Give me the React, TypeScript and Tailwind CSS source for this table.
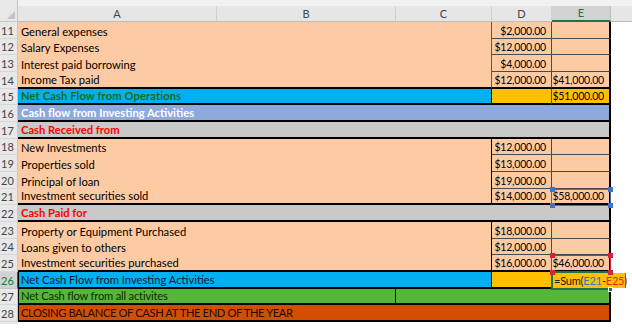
import React from "react";

const FONT = "font-['Lato','Liberation_Sans',sans-serif]";
const NUM = "text-[10.5px] tracking-[-0.2px]";

function RowNum({ n, h, active }: { n: number; h: string; active?: boolean }) {
  return (
    <div
      className={`${h} w-[18px] shrink-0 flex items-end justify-center pr-[2px] text-[11px] leading-[14px] border-b border-r ${
        active
          ? "bg-[#d2d2d2] text-[#217346] border-b-[#c6c6c6] border-r-[#217346]"
          : "bg-[#e8e8e8] text-[#444444] border-b-[#d6d6d6] border-r-[#c6c6c6]"
      }`}
    >
      {n}
    </div>
  );
}

function PeachRow({ n, h, a, d, e, last, strongC }: { n: number; h: string; a: string; d: string; e?: string; last?: boolean; strongC?: boolean }) {
  return (
    <div className={`flex ${h}`}>
      <RowNum n={n} h={h} />
      <div
        className={`w-[474px] bg-[#fdcba3] flex items-end pl-[3px] text-black border-r ${
          strongC ? "border-r-black" : "border-r-[#5a5a5a]"
        } ${last ? "border-b-2 border-b-black" : ""}`}
      >
        {a}
      </div>
      <div
        className={`w-[60px] bg-[#fdcba3] flex items-end justify-end pr-[5px] text-black ${NUM} border-r border-r-[#4a4a4a] ${
          last ? "border-b-2 border-b-black" : "border-b border-b-[#4a4a4a]"
        }`}
      >
        {d}
      </div>
      <div
        className={`w-[59px] bg-[#fdcba3] flex items-end justify-end pr-[5px] text-black ${NUM} border-r-2 border-r-black ${
          last ? "border-b-2 border-b-black" : "border-b border-b-[#4a4a4a]"
        }`}
      >
        {e}
      </div>
    </div>
  );
}

function Corner({ x, y, color }: { x: number; y: number; color: string }) {
  return <div className={`absolute w-[5px] h-[5px] ${color}`} style={{ left: x - 2, top: y - 2 }} />;
}

export default function App() {
  return (
    <div className={`relative w-[632px] h-[332px] bg-white overflow-hidden ${FONT} text-[11.2px] leading-[14px]`}>
      {/* Column header */}
      <div className="flex h-[22px] bg-[#f2f2f2]">
        <div className="w-[18px] h-[22px] bg-[#e8e8e8] border-r border-b border-[#c6c6c6] flex items-end justify-end pr-[2px] pb-[2px]">
          <svg width="8" height="8" viewBox="0 0 8 8">
            <polygon points="8,0 8,8 0,8" fill="#c2c2c2" />
          </svg>
        </div>
        <div className="flex flex-col justify-end">
          <div className="flex h-[16px] text-[11px] leading-[14px] text-[#444444]">
            <div className="w-[199px] bg-[#e6e6e6] border-r border-b border-r-[#cfcfcf] border-b-[#bdbdbd] flex items-center justify-center">A</div>
            <div className="w-[179px] bg-[#e6e6e6] border-r border-b border-r-[#cfcfcf] border-b-[#bdbdbd] flex items-center justify-center">B</div>
            <div className="w-[96px] bg-[#e6e6e6] border-r border-b border-r-[#cfcfcf] border-b-[#bdbdbd] flex items-center justify-center">C</div>
            <div className="w-[60px] bg-[#e6e6e6] border-r border-b border-r-[#cfcfcf] border-b-[#bdbdbd] flex items-center justify-center">D</div>
            <div className="w-[59px] bg-[#d2d2d2] border-r border-r-[#bdbdbd] border-b-2 border-b-[#217346] flex items-center justify-center text-[#217346]">E</div>
            <div className="w-[21px] bg-[#e6e6e6] border-b border-b-[#bdbdbd]" />
          </div>
        </div>
      </div>

      <PeachRow n={11} h="h-[17px]" a="General expenses" d="$2,000.00" />
      <PeachRow n={12} h="h-[16px]" a="Salary Expenses" d="$12,000.00" />
      <PeachRow n={13} h="h-[17px]" a="Interest paid borrowing" d="$4,000.00" />
      <PeachRow n={14} h="h-[17px]" a="Income Tax paid" d="$12,000.00" e="$41,000.00" last />

      {/* 15 */}
      <div className="flex h-[16px]">
        <RowNum n={15} h="h-[16px]" />
        <div className="w-[474px] bg-[#00b0f0] border-r border-r-black border-b-2 border-b-black flex items-end pl-[3px] font-bold tracking-[0.1px] text-[#1a6a1a]">
          Net Cash Flow from Operations
        </div>
        <div className="w-[60px] bg-[#ffc000] border-r border-r-[#4a4a4a] border-b-2 border-b-black" />
        <div className={`w-[59px] bg-[#ffc000] border-r-2 border-r-black border-b-2 border-b-black flex items-end justify-end pr-[5px] text-black ${NUM}`}>
          $51,000.00
        </div>
      </div>

      {/* 16 */}
      <div className="flex h-[17px]">
        <RowNum n={16} h="h-[17px]" />
        <div className="w-[593px] bg-[#8ea9db] border-r-2 border-r-black border-b-2 border-b-black flex items-end pl-[3px] font-bold text-white">
          Cash flow from Investing Activities
        </div>
      </div>

      {/* 17 */}
      <div className="flex h-[17px]">
        <RowNum n={17} h="h-[17px]" />
        <div className="w-[593px] bg-[#c9c9c9] border-r-2 border-r-black border-b-2 border-b-black flex items-end pl-[3px] font-bold text-[#ff0000]">
          Cash Received from
        </div>
      </div>

      <PeachRow n={18} h="h-[16px]" a="New Investments" d="$12,000.00" strongC />
      <PeachRow n={19} h="h-[17px]" a="Properties sold" d="$13,000.00" strongC />
      <PeachRow n={20} h="h-[17px]" a="Principal of loan" d="$19,000.00" strongC />
      <PeachRow n={21} h="h-[16px]" a="Investment securities sold" d="$14,000.00" e="$58,000.00" strongC last />

      {/* 22 */}
      <div className="flex h-[17px]">
        <RowNum n={22} h="h-[17px]" />
        <div className="w-[593px] bg-[#c9c9c9] border-r-2 border-r-black border-b-2 border-b-black flex items-end pl-[3px] font-bold text-[#ff0000]">
          Cash Paid for
        </div>
      </div>

      <PeachRow n={23} h="h-[17px]" a="Property or Equipment Purchased" d="$18,000.00" strongC />
      <PeachRow n={24} h="h-[16px]" a="Loans given to others" d="$12,000.00" strongC />
      <PeachRow n={25} h="h-[17px]" a="Investment securities purchased" d="$16,000.00" e="$46,000.00" strongC last />

      {/* 26 */}
      <div className="flex h-[17px]">
        <RowNum n={26} h="h-[17px]" active />
        <div className="w-[474px] bg-[#00b0f0] border-l border-l-black border-r border-r-black border-b-2 border-b-black flex items-end pl-[2px] text-[#0d1a33]">
          Net Cash Flow from Investing Activities
        </div>
        <div className="w-[60px] bg-[#ffc000] border-r border-r-[#4a4a4a] border-b-2 border-b-black" />
        <div className="w-[59px] bg-[#ffc000] border-r-2 border-r-black border-b-2 border-b-black" />
      </div>

      {/* 27 */}
      <div className="flex h-[16px]">
        <RowNum n={27} h="h-[16px]" />
        <div className="w-[378px] bg-[#55b63a] border-l border-l-black border-r border-r-black border-b-2 border-b-black flex items-end pl-[2px] tracking-[-0.2px] text-[#0f2a0a]">
          Net Cash flow from all activites
        </div>
        <div className="w-[215px] bg-[#55b63a] border-r-2 border-r-black border-b-2 border-b-black" />
      </div>

      {/* 28 */}
      <div className="flex h-[17px]">
        <RowNum n={28} h="h-[17px]" />
        <div className="w-[593px] bg-[#d24f00] border-l border-l-black border-r-2 border-r-black border-b-2 border-b-black flex items-end pl-[2px] tracking-[-0.4px] text-[#260800]">
          CLOSING BALANCE OF CASH AT THE END OF THE YEAR
        </div>
      </div>
      <div className="flex h-[10px]">
        <div className="w-[18px] h-[2px] bg-[#e8e8e8]" />
      </div>

      {/* E21 blue reference */}
      <div className="absolute left-[551px] top-[189px] w-[60px] h-[17px] border border-[#3f72c8]" />
      <Corner x={552} y={189} color="bg-[#3f72c8]" />
      <Corner x={610} y={189} color="bg-[#3f72c8]" />
      <Corner x={552} y={205} color="bg-[#3f72c8]" />
      <Corner x={610} y={205} color="bg-[#3f72c8]" />

      {/* E25 red reference */}
      <div className="absolute left-[551px] top-[255px] w-[60px] h-[17px] border border-[#d8213f]" />

      {/* E26 active editing cell */}
      <div className="absolute left-[551px] top-[271px] w-[61px] h-[19px] border-2 border-[#217346]" />
      <div className="absolute left-[553px] top-[273px] w-[73px] h-[15px] bg-[#ffc000] border-r border-r-[#5b6b80] flex items-end pl-[1px] text-[11px] leading-[14px] tracking-[-0.2px] whitespace-nowrap">
        <span className="text-[#1a1a1a]">=Sum(</span>
        <span className="text-[#3c74b8]">E21</span>
        <span className="text-[#1a1a1a]">-</span>
        <span className="text-[#e8241c]">E25</span>
        <span className="text-[#7a3c8c]">)</span>
        <span className="ml-[1px] w-[1px] h-[13px] bg-black self-center" />
      </div>
      <Corner x={552} y={255} color="bg-[#d8213f]" />
      <Corner x={610} y={255} color="bg-[#d8213f]" />
      <Corner x={552} y={272} color="bg-[#d8213f]" />
      <Corner x={610} y={272} color="bg-[#d8213f]" />
      <div className="absolute left-[608px] top-[287px] w-[5px] h-[5px] bg-[#217346] border border-white" />
    </div>
  );
}
